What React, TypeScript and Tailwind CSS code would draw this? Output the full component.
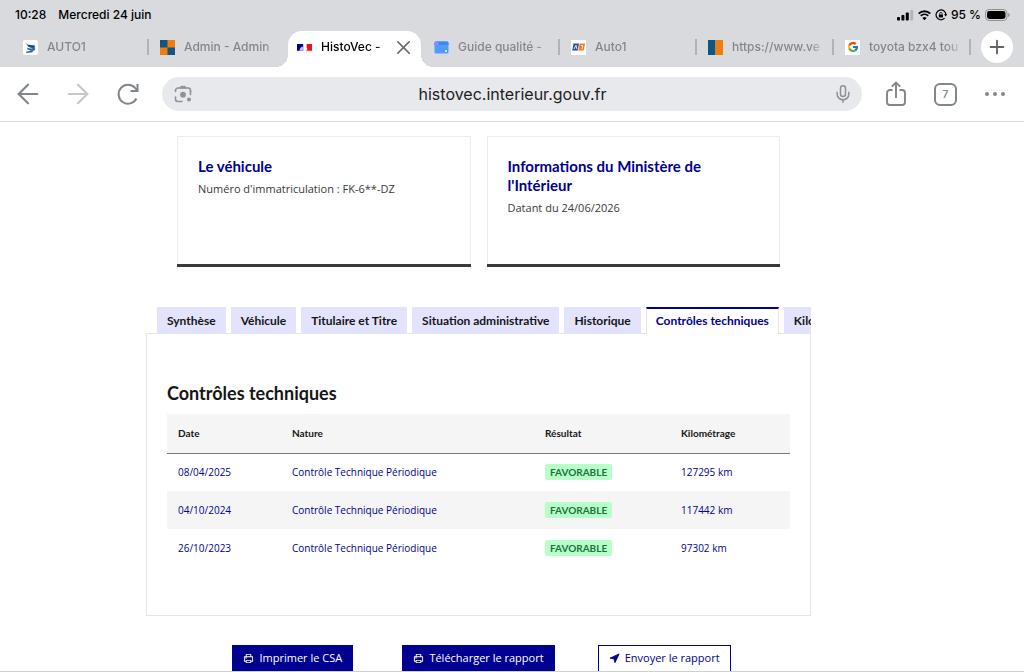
import type { ReactNode } from "react";
import { ArrowLeft, ArrowRight, Mic, Navigation, Plus, X } from "lucide-react";
import clsx from "clsx";
import { RiPrinterLine } from "react-icons/ri";
import { FcGoogle } from "react-icons/fc";

function SignalIcon() {
  return (
    <svg width="17" height="12" viewBox="0 0 17 12" aria-hidden="true">
      <rect x="0" y="8" width="3" height="3.5" rx="0.8" />
      <rect x="4.4" y="6" width="3" height="5.5" rx="0.8" />
      <rect x="8.8" y="3.5" width="3" height="8" rx="0.8" />
      <rect x="13.2" y="1" width="3" height="10.5" rx="0.8" fill="#b4b5b9" />
    </svg>
  );
}

function WifiIcon() {
  return (
    <svg width="13" height="12" viewBox="0 0 13 12" fill="none" stroke="black" strokeWidth="1.9" aria-hidden="true">
      <path d="M0.7 4.6a8.3 8.3 0 0 1 11.6 0" />
      <path d="M2.8 6.9a5.3 5.3 0 0 1 7.4 0" />
      <path d="M6.5 11.2 4.4 9a3 3 0 0 1 4.2 0z" fill="black" stroke="none" />
    </svg>
  );
}

function RotationLockIcon() {
  return (
    <svg width="12" height="12" viewBox="0 0 12 12" fill="none" stroke="black" strokeWidth="1.2" aria-hidden="true">
      <path d="M9.6 9.2A4.9 4.9 0 1 1 10.9 6" />
      <path d="M9 5.2h3.2L10.7 7.6z" fill="black" stroke="none" />
      <rect x="3.8" y="5.4" width="4.2" height="3.2" rx="0.5" fill="black" stroke="none" />
      <path d="M4.7 5.6V4.6a1.2 1.2 0 0 1 2.4 0v1" strokeWidth="0.8" />
    </svg>
  );
}

function BatteryIcon() {
  return (
    <svg width="25" height="12" viewBox="0 0 25 12" aria-hidden="true">
      <rect x="0.5" y="0.5" width="21.5" height="11" rx="3.6" fill="none" stroke="#8f9094" />
      <rect x="2" y="2" width="18.5" height="8" rx="2.4" />
      <path d="M23.2 4v4c1-.3 1.5-1.1 1.5-2s-.5-1.7-1.5-2z" fill="#8f9094" />
    </svg>
  );
}

function Auto1Favicon() {
  return (
    <svg width="15" height="15" viewBox="0 0 15 15" aria-hidden="true">
      <rect width="15" height="15" rx="2" fill="white" />
      <path d="M2.2 2.6 4.4 4.6 11.8 5.6 12 7.4 9.4 8.2 5.2 6.8 4 4.8z" fill="#1d4e86" />
      <path d="M4 7.8 8 8.6 12.3 7.4 12 9.8 8.6 12.6 3.2 13 3.2 11.8 8 10.6 4.6 9.4z" fill="#2f6ca8" />
    </svg>
  );
}

function CheckerFavicon() {
  return (
    <svg width="15" height="15" viewBox="0 0 15 15" aria-hidden="true">
      <rect width="15" height="15" fill="#115680" />
      <rect x="7.5" width="7.5" height="7.5" fill="#f07c0c" />
      <rect y="7.5" width="7.5" height="7.5" fill="#f07c0c" />
    </svg>
  );
}

function FrenchFavicon() {
  return (
    <svg width="15" height="15" viewBox="0 0 15 15" aria-hidden="true">
      <rect y="4" width="6.2" height="6.8" fill="#000091" />
      <path d="M2.2 10.8 3.2 8 5 6.5l1.2.5v3.8z" fill="#b9b9e3" />
      <path d="M9.8 4H15v6.800H8.800l1.700-1.600L9.500 7z" fill="#f01018" />
    </svg>
  );
}

function GuideFavicon() {
  return (
    <svg width="15" height="15" viewBox="0 0 15 15" aria-hidden="true">
      <rect x="0.5" y="1.5" width="14" height="12" rx="1.5" fill="#4f9cff" />
      <path d="M0.5 5V3a1.5 1.5 0 0 1 1.5-1.5h11A1.5 1.5 0 0 1 14.5 3v2z" fill="#3f86f7" />
      <path d="M0.5 5V3A1.5 1.5 0 0 1 2 1.5h2.500V5z" fill="#8f8cf5" />
      <circle cx="12" cy="11" r="1" fill="white" />
    </svg>
  );
}

function AutoOneFavicon() {
  return (
    <svg width="15" height="15" viewBox="0 0 15 15" aria-hidden="true">
      <rect width="15" height="15" fill="white" />
      <path d="M2.5 3.5h5.5l-1.3 7H1.2z" fill="#2a4b9b" />
      <path d="M8.7 3.5h5.3l-1.3 7H7.4z" fill="#f47b20" />
      <path d="M3 9 5 5.2 5.9 9M10 5.5h1.7L11 9" fill="none" stroke="white" strokeWidth="0.9" />
    </svg>
  );
}

function StripeFavicon() {
  return (
    <svg width="15" height="15" viewBox="0 0 15 15" aria-hidden="true">
      <rect width="7.5" height="15" fill="#115680" />
      <rect x="7.5" width="7.5" height="15" fill="#f07c0c" />
    </svg>
  );
}

function GoogleFavicon() {
  return (
    <span className="flex size-[15px] items-center justify-center bg-white">
      <FcGoogle size={12} />
    </span>
  );
}

function ReloadIcon() {
  return (
    <svg width="24" height="24" viewBox="0 0 24 24" fill="none" stroke="currentColor" strokeWidth="2" aria-hidden="true">
      <path d="M20.4 16.5A9.4 9.4 0 1 1 19.2 6.2L21 8.2" />
      <path d="M21.5 2v7h-7" />
    </svg>
  );
}

function LensIcon() {
  return (
    <svg width="18" height="18" viewBox="0 0 18 18" fill="none" stroke="currentColor" strokeWidth="1.6" strokeLinecap="round" aria-hidden="true">
      <path d="M1.5 6.5V5.5a2.5 2.5 0 0 1 2.5-2.5h10a2.5 2.5 0 0 1 2.5 2.5v1" />
      <path d="M1.5 12v2a2.5 2.5 0 0 0 2.5 2.5h4" />
      <path d="M16.5 6.5V9.5" />
      <path d="M6 2.6 7 1.3h4l1 1.300z" fill="currentColor" strokeWidth="1" />
      <circle cx="9" cy="9.7" r="2.9" fill="currentColor" stroke="none" />
      <circle cx="15" cy="14.6" r="2" fill="currentColor" stroke="none" />
    </svg>
  );
}

function ShareIcon() {
  return (
    <svg width="20" height="26" viewBox="0 0 20 26" fill="none" stroke="currentColor" strokeWidth="1.9" aria-hidden="true">
      <path d="M6.5 9H4a3 3 0 0 0-3 3v9a3 3 0 0 0 3 3h12a3 3 0 0 0 3-3v-9a3 3 0 0 0-3-3h-2.5" />
      <path d="M10 17V2" />
      <path d="M5.8 5.7 10 1.5l4.2 4.2" />
    </svg>
  );
}

const browserTabs: { title: string; icon: ReactNode; active?: boolean; divider?: boolean }[] = [
  { title: "AUTO1", icon: <Auto1Favicon />, divider: true },
  { title: "Admin - Admin", icon: <CheckerFavicon /> },
  { title: "HistoVec -", icon: <FrenchFavicon />, active: true },
  { title: "Guide qualité -", icon: <GuideFavicon />, divider: true },
  { title: "Auto1", icon: <AutoOneFavicon />, divider: true },
  { title: "https://www.ve", icon: <StripeFavicon />, divider: true },
  { title: "toyota bzx4 tou", icon: <GoogleFavicon />, divider: true },
];

function StatusBar() {
  return (
    <div className="flex h-[31px] items-center justify-between pr-3.5 pb-px pl-[15px] text-[12px] font-medium text-black">
      <div className="flex gap-3">
        <span>10:28</span>
        <span>Mercredi 24 juin</span>
      </div>
      <div className="flex items-center gap-1">
        <SignalIcon />
        <WifiIcon />
        <RotationLockIcon />
        <span>95 %</span>
        <BatteryIcon />
      </div>
    </div>
  );
}

function BrowserTabs() {
  return (
    <div className="flex h-9 items-start pl-3">
      <ul className="grid h-9 min-w-0 flex-1 grid-cols-7">
        {browserTabs.map((tab) => (
          <li
            key={tab.title}
            className={clsx(
              "relative flex min-w-0 items-start",
              tab.active ? "mx-0.5 rounded-t-[14px] bg-white pr-1.5 pl-[9px] text-black" : "pl-[11px] text-[#85868b]",
            )}
          >
            {tab.active && (
              <>
                <span className="absolute bottom-0 -left-3 size-3 bg-[radial-gradient(circle_at_0_0,transparent_12px,white_12px)]" />
                <span className="absolute -right-3 bottom-0 size-3 bg-[radial-gradient(circle_at_100%_0,transparent_12px,white_12px)]" />
              </>
            )}
            <button type="button" className="flex h-8 min-w-0 flex-1 items-center gap-[9px] text-left text-[12px] font-medium">
              <span className="shrink-0">{tab.icon}</span>
              <span
                className={clsx(
                  "flex-1 overflow-hidden whitespace-nowrap",
                  "[mask-image:linear-gradient(to_left,transparent,black_16px)]",
                  !tab.active && "mr-1.5",
                )}
              >
                {tab.title}
              </span>
            </button>
            {tab.active && (
              <button type="button" aria-label="Fermer l'onglet" className="flex h-8 items-center text-[#5f6368]">
                <X size={23} strokeWidth={1.7} />
              </button>
            )}
            {tab.divider && <span className="mt-2 h-4 w-0.5 bg-[#b1b3b8]" />}
          </li>
        ))}
      </ul>
      <button
        type="button"
        aria-label="Nouvel onglet"
        className="mr-[11px] ml-2.5 flex size-8 items-center justify-center rounded-full bg-white text-[#5f6368]"
      >
        <Plus size={22} strokeWidth={2} />
      </button>
    </div>
  );
}

function Toolbar() {
  return (
    <div className="flex h-[55px] items-center border-b border-[#dcdde0] bg-white pr-[19px] pl-3 text-[#80868b]">
      <button type="button" aria-label="Retour">
        <ArrowLeft size={32} strokeWidth={1.6} />
      </button>
      <button type="button" aria-label="Avancer" className="ml-[18px] text-[#c5c8cb]">
        <ArrowRight size={32} strokeWidth={1.6} />
      </button>
      <button type="button" aria-label="Actualiser" className="ml-[22px]">
        <ReloadIcon />
      </button>
      <div className="ml-[22px] flex h-[34px] flex-1 items-center rounded-full bg-[#e8e9ed] pr-[9px] pl-3 text-[#8d9297]">
        <button type="button" aria-label="Rechercher avec une image">
          <LensIcon />
        </button>
        <input
          type="text"
          aria-label="Adresse"
          defaultValue="histovec.interieur.gouv.fr"
          className="min-w-0 flex-1 bg-transparent text-center text-[16px] text-[#202124] outline-none"
        />
        <button type="button" aria-label="Recherche vocale">
          <Mic size={20} strokeWidth={1.8} />
        </button>
      </div>
      <button type="button" aria-label="Partager" className="ml-6">
        <ShareIcon />
      </button>
      <button
        type="button"
        aria-label="7 onglets ouverts"
        className="ml-7 flex size-[23px] items-center justify-center rounded-md border-2 border-[#80868b] text-[10px] font-semibold"
      >
        7
      </button>
      <button type="button" aria-label="Plus d'options" className="ml-7 flex gap-1">
        <span className="size-1 rounded-full bg-current" />
        <span className="size-1 rounded-full bg-current" />
        <span className="size-1 rounded-full bg-current" />
      </button>
    </div>
  );
}

function InfoCard({ title, children }: { title: string; children: ReactNode }) {
  return (
    <div className="flex min-h-[131px] flex-1 flex-col border border-b-0 border-[#ececec]">
      <div className="flex-1 px-5 pt-5">
        <h3 className="font-['Lato',sans-serif] text-[15px] leading-[19px] font-bold text-[#000091]">{title}</h3>
        <p className="mt-1 text-[11px] leading-[18px] text-[#3a3a3a]">{children}</p>
      </div>
      <div className="-mx-px h-[3px] bg-[#3a3a3a]" />
    </div>
  );
}

const sections = [
  "Synthèse",
  "Véhicule",
  "Titulaire et Titre",
  "Situation administrative",
  "Historique",
  "Contrôles techniques",
  "Kilométrage",
];

const controls = [
  { date: "08/04/2025", nature: "Contrôle Technique Périodique", result: "Favorable", km: "127295 km" },
  { date: "04/10/2024", nature: "Contrôle Technique Périodique", result: "Favorable", km: "117442 km" },
  { date: "26/10/2023", nature: "Contrôle Technique Périodique", result: "Favorable", km: "97302 km" },
];

function ControlsTable() {
  return (
    <table className="w-full table-fixed text-left text-[10px]">
      <colgroup>
        <col className="w-[114px]" />
        <col />
        <col className="w-[136px]" />
        <col className="w-[120px]" />
      </colgroup>
      <thead className="font-['Lato',sans-serif]">
        <tr className="h-[39px] border-b border-[#7a7a7a] bg-[#f5f5f5] text-[#161616]">
          <th className="px-[11px] font-bold">Date</th>
          <th className="px-[11px] font-bold">Nature</th>
          <th className="px-[11px] font-bold">Résultat</th>
          <th className="px-[11px] font-bold">Kilométrage</th>
        </tr>
      </thead>
      <tbody className="text-[#000091]">
        {controls.map((row) => (
          <tr key={row.date} className="h-[38px] even:bg-[#f5f5f5]">
            <td className="px-[11px]">{row.date}</td>
            <td className="px-[11px]">{row.nature}</td>
            <td className="px-[11px]">
              <span className="inline-block rounded-xs bg-[#b8fec9] px-[5px] font-['Lato',sans-serif] leading-4 font-bold text-[#18753c] uppercase">
                {row.result}
              </span>
            </td>
            <td className="px-[11px]">{row.km}</td>
          </tr>
        ))}
      </tbody>
    </table>
  );
}

function ActionButton({ icon, label, outline }: { icon: ReactNode; label: string; outline?: boolean }) {
  return (
    <button
      type="button"
      className={clsx(
        "flex h-[27px] items-center gap-[5px] border border-[#000091] px-2.5 text-[11px] font-medium whitespace-nowrap",
        outline ? "bg-white text-[#000091]" : "bg-[#000091] text-white",
      )}
    >
      {icon}
      {label}
    </button>
  );
}

export default function App() {
  return (
    <div className="flex h-screen flex-col overflow-hidden bg-white font-['Inter','Liberation_Sans',sans-serif]">
      <header className="shrink-0 bg-[#d9dade]">
        <StatusBar />
        <BrowserTabs />
        <Toolbar />
      </header>

      <main className="flex-1 overflow-hidden border-b border-[#cfcfcf] pr-[67px] font-['Open_Sans','Noto_Sans',sans-serif]">
        <div className="mx-auto max-w-[665px] pt-3.5">
          <div className="flex gap-4 px-[31px]">
            <InfoCard title="Le véhicule">Numéro d'immatriculation : FK-6**-DZ</InfoCard>
            <InfoCard title="Informations du Ministère de l'Intérieur">Datant du 24/06/2026</InfoCard>
          </div>

          <div role="tablist" className="relative z-10 mt-10 -mb-px flex gap-[5px] overflow-hidden pl-[11px]">
            {sections.map((name) => {
              const active = name === "Contrôles techniques";
              return (
                <button
                  key={name}
                  type="button"
                  role="tab"
                  aria-selected={active}
                  className={clsx(
                    "h-[27px] shrink-0 font-['Lato',sans-serif] text-[12px] font-bold whitespace-nowrap",
                    active
                      ? "border-x border-t-2 border-x-[#e5e5e5] border-t-[#000091] bg-white px-[9px] pb-0.5 text-[#000091]"
                      : "bg-[#e3e3fd] px-2.5 text-[#161616]",
                  )}
                >
                  {name}
                </button>
              );
            })}
          </div>
          <section role="tabpanel" className="min-h-[283px] border border-[#e5e5e5] px-5 pt-12">
            <h2 className="mb-2.5 font-['Lato',sans-serif] text-[18px] leading-[22px] font-bold text-[#161616]">
              Contrôles techniques
            </h2>
            <ControlsTable />
          </section>

          <div className="mx-auto mt-[29px] grid max-w-[557px] grid-cols-3 justify-items-center">
            <ActionButton icon={<RiPrinterLine size={11} />} label="Imprimer le CSA" />
            <ActionButton icon={<RiPrinterLine size={11} />} label="Télécharger le rapport" />
            <ActionButton icon={<Navigation size={11} fill="currentColor" />} label="Envoyer le rapport" outline />
          </div>
        </div>
      </main>
    </div>
  );
}
